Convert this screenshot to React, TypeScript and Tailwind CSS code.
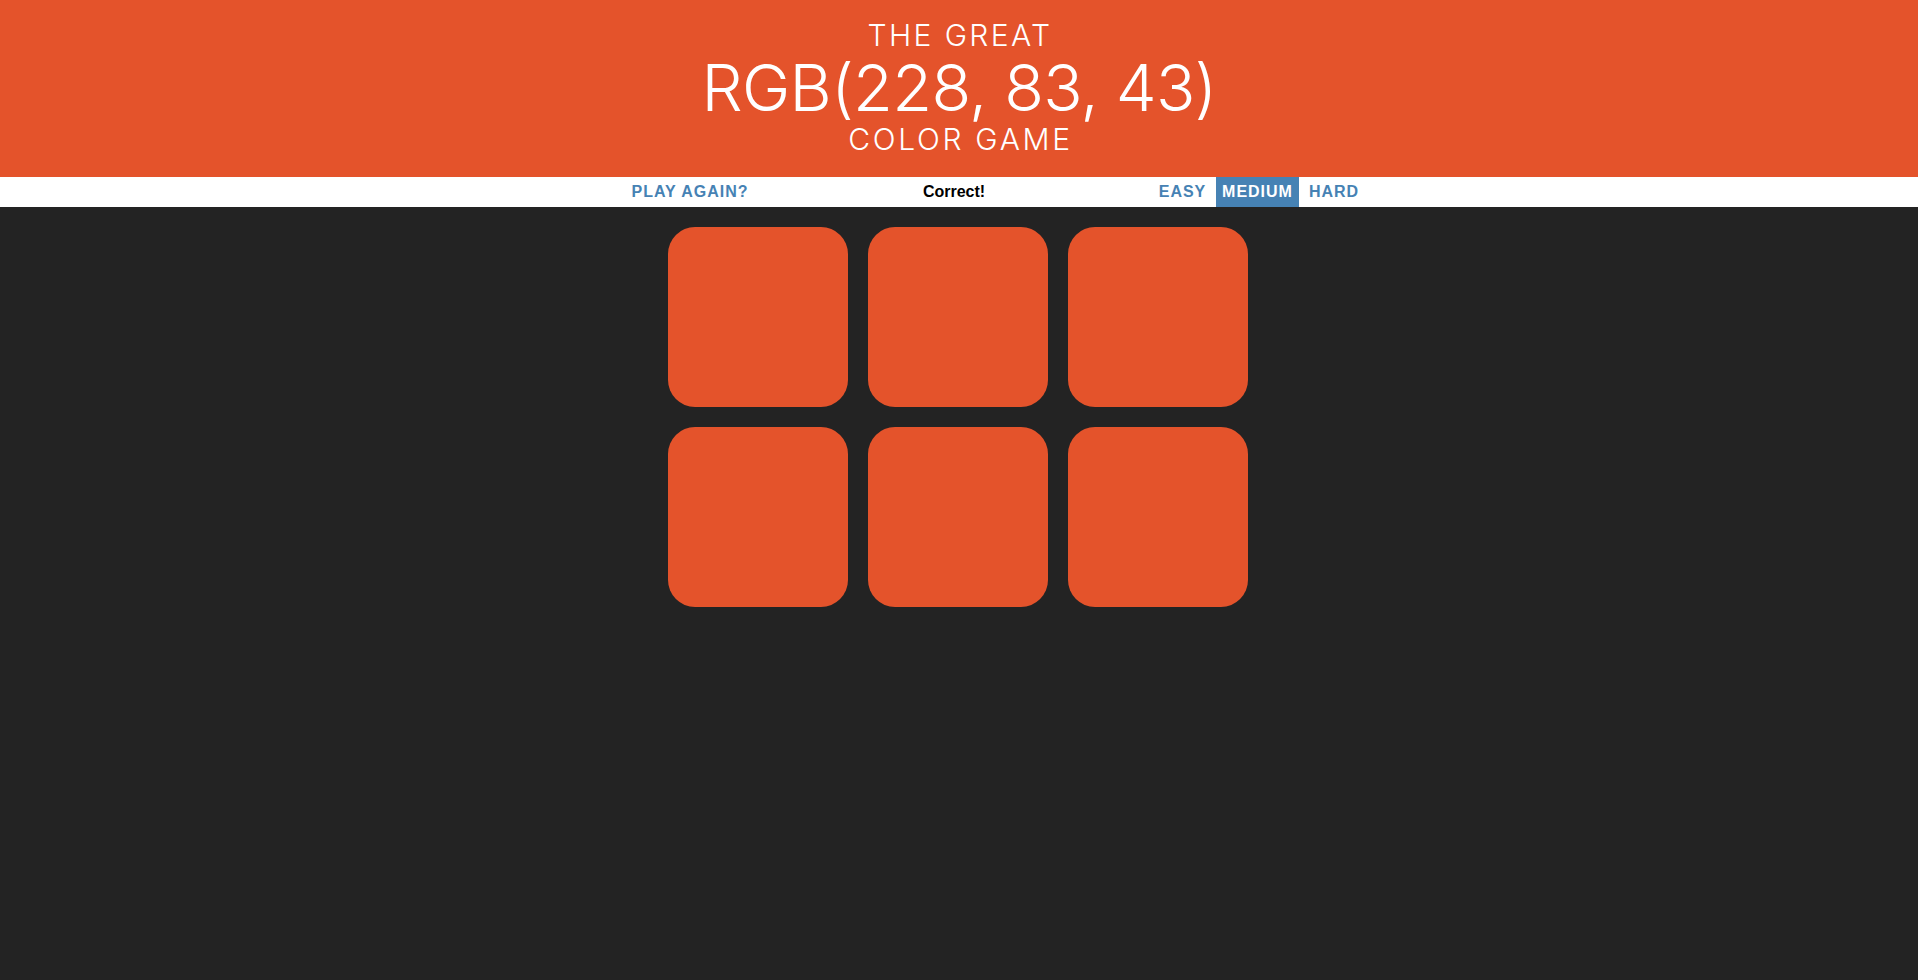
import { useState } from "react";

const target = "rgb(228, 83, 43)";
const colors = Array(6).fill(target);
const modes = [
  { label: "Easy", width: "w-[57px]" },
  { label: "Medium", width: "w-[83px]" },
  { label: "Hard", width: "w-[60px]" },
];

export default function App() {
  const [mode, setMode] = useState("Medium");

  return (
    <div className="min-h-[980px] bg-[#232323]">
      <header className="h-[177px] bg-[rgb(228,83,43)] pt-[19px] text-center uppercase text-white font-light font-['Inter',sans-serif]">
        <div className="pl-[2px] text-[30px] leading-[33px] tracking-[2.4px]">The Great</div>
        <div className="text-[65px] leading-[71px] tracking-[-0.7px]">{target}</div>
        <div className="pl-[3px] text-[30px] leading-[33px] tracking-[2.7px]">Color Game</div>
      </header>

      <nav className="flex h-[30px] justify-center bg-white pl-[72px] font-['Liberation_Sans',Arial,sans-serif] text-[16px] font-bold">
        <button className="w-[128px] h-full uppercase tracking-[1px] text-[#4682b4]">
          Play again?
        </button>
        <span className="flex w-[400px] items-center justify-center text-black">
          Correct!
        </span>
        <div className="flex gap-[5px]">
          {modes.map((m) => (
            <button
              key={m.label}
              onClick={() => setMode(m.label)}
              className={
                m.width +
                " h-full uppercase tracking-[1px] " +
                (mode === m.label
                  ? "bg-[#4682b4] text-white"
                  : "text-[#4682b4]")
              }
            >
              {m.label}
            </button>
          ))}
        </div>
      </nav>

      <main className="mx-auto grid w-[582px] grid-cols-3 gap-[20px] pr-[2px] pt-[20px]">
        {colors.map((c, i) => (
          <div
            key={i}
            className="h-[180px] rounded-[15%] bg-[rgb(228,83,43)]"
          />
        ))}
      </main>
    </div>
  );
}
